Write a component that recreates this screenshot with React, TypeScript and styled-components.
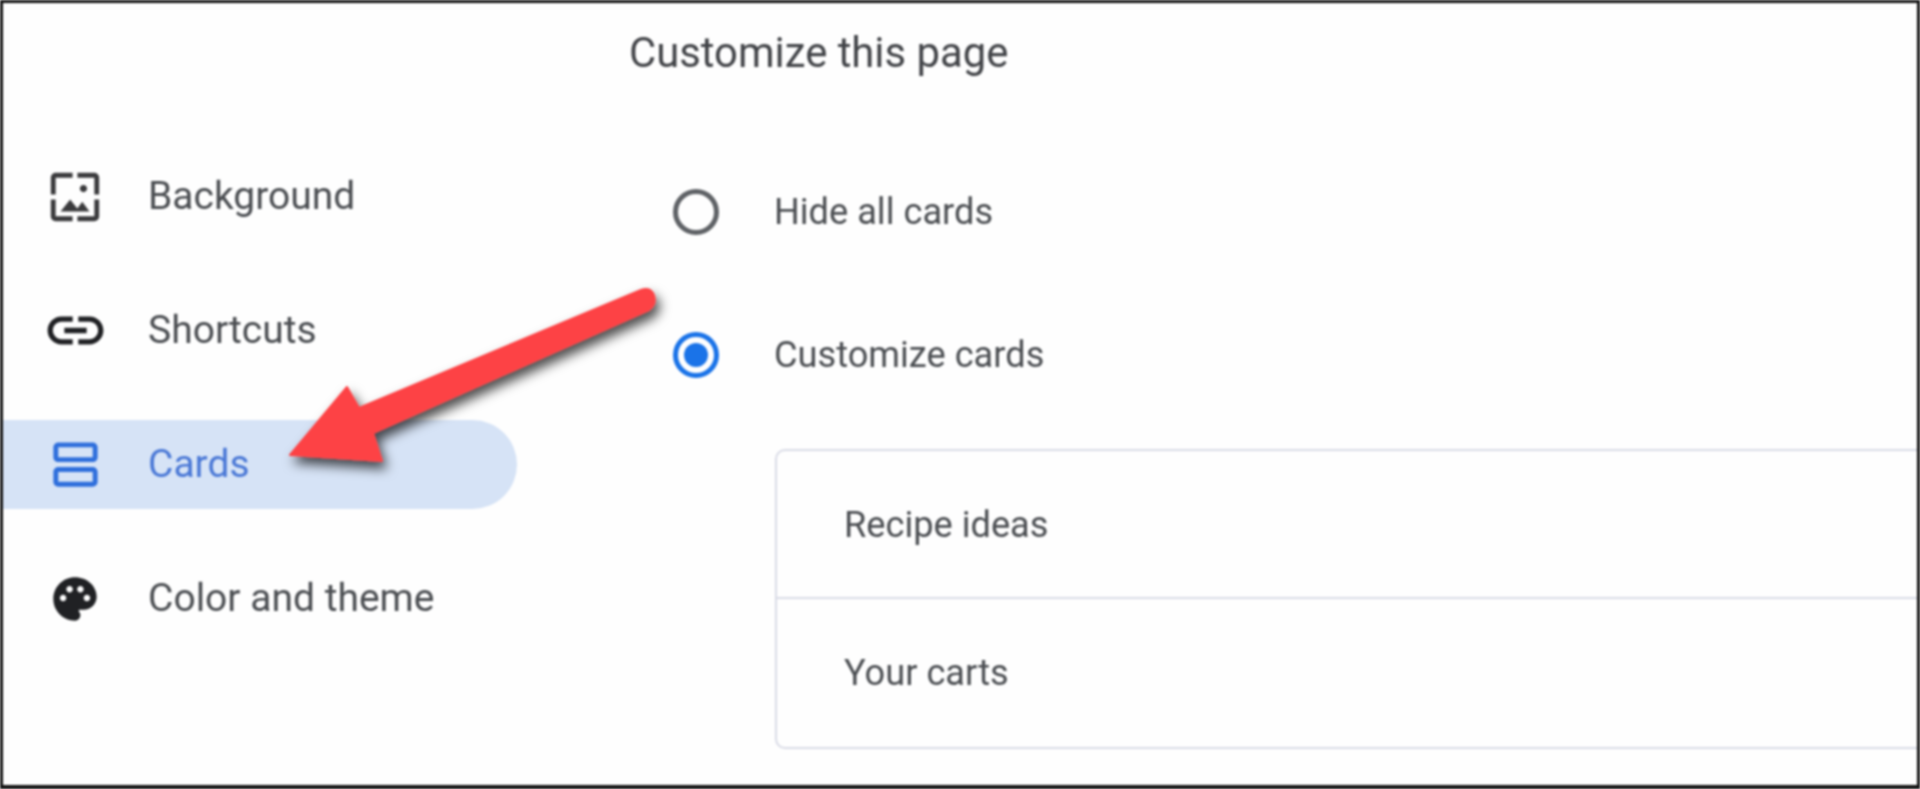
import React from "react";
import styled, { createGlobalStyle } from "styled-components";
import { MdWallpaper, MdLink, MdOutlineViewAgenda, MdPalette } from "react-icons/md";

const Global = createGlobalStyle`
  html, body { margin: 0; padding: 0; background: #fff; }
  body { font-family: Roboto, "Liberation Sans", sans-serif; }
`;

const Frame = styled.div`
  box-sizing: border-box;
  width: 1920px;
  height: 789px;
  border: 3px solid #111;
  border-bottom-width: 4px;
  background: #fefefe;
  overflow: hidden;
  position: relative;
  display: grid;
  grid-template-columns: 626px 1fr;
  filter: blur(1.2px);
`;

const Sidebar = styled.nav`
  display: flex;
  flex-direction: column;
  gap: 45px;
  padding-top: 149px;
`;

const NavRow = styled.div<{ $active?: boolean }>`
  width: 514px;
  height: 89px;
  display: flex;
  align-items: center;
  border-radius: 0 45px 45px 0;
  background: ${(p) => (p.$active ? "#d6e3f6" : "transparent")};
  color: ${(p) => (p.$active ? "#4a78d6" : "#4b4e52")};
`;

const IconSlot = styled.span<{ $color: string }>`
  flex: none;
  width: 60px;
  margin: 0 43px 0 42px;
  display: flex;
  justify-content: center;
  color: ${(p) => p.$color};
  & > svg { display: block; flex: none; }
`;

const NavLabel = styled.span`
  font-size: 39px;
  font-weight: 400;
  line-height: 1;
`;

const Main = styled.main`
  display: flex;
  flex-direction: column;
`;

const Title = styled.h1`
  margin: 0;
  height: 100px;
  font-size: 41.8px;
  font-weight: 400;
  line-height: 100px;
  color: #424448;
`;

const RadioGroup = styled.div`
  display: flex;
  flex-direction: column;
  gap: 53px;
  padding: 64px 0 0 44px;
`;

const RadioRow = styled.div`
  height: 90px;
  display: flex;
  align-items: center;
  gap: 55px;
`;

const Radio = styled.span<{ $on?: boolean }>`
  box-sizing: border-box;
  flex: none;
  width: 46px;
  height: 46px;
  border-radius: 50%;
  border: 5px solid ${(p) => (p.$on ? "#1a73e8" : "#5f6266")};
  padding: 6px;
  &::after {
    content: "";
    display: ${(p) => (p.$on ? "block" : "none")};
    width: 100%;
    height: 100%;
    border-radius: 50%;
    background: #1a73e8;
  }
`;

const OptionLabel = styled.span`
  font-size: 36.2px;
  line-height: 1;
  color: #4b4e52;
`;

const CardList = styled.div`
  box-sizing: border-box;
  margin: 49px -30px 0 146px;
  height: 300px;
  border: 2px solid #d9dbe6;
  border-radius: 10px;
  display: flex;
  flex-direction: column;
`;

const CardRow = styled.div`
  flex: 1;
  display: flex;
  align-items: center;
  padding-left: 67px;
  font-size: 36.2px;
  color: #4b4e52;
  & + & {
    border-top: 2px solid #d9dbe6;
    padding-bottom: 2px;
  }
`;

const ArrowLayer = styled.svg`
  position: absolute;
  left: -3px;
  top: -3px;
  width: 1920px;
  height: 789px;
  pointer-events: none;
`;

const items = [
  { label: "Background", Icon: MdWallpaper, size: 58, color: "#3a3a3c" },
  { label: "Shortcuts", Icon: MdLink, size: 67, color: "#202124" },
  { label: "Cards", Icon: MdOutlineViewAgenda, size: 59, color: "#2f6fdc", active: true },
  { label: "Color and theme", Icon: MdPalette, size: 52, color: "#202124" },
];

export default function App() {
  return (
    <>
      <Global />
      <Frame>
        <Sidebar>
          {items.map(({ label, Icon, size, color, active }) => (
            <NavRow key={label} $active={active}>
              <IconSlot $color={color}>
                <Icon size={size} />
              </IconSlot>
              <NavLabel>{label}</NavLabel>
            </NavRow>
          ))}
        </Sidebar>
        <Main>
          <Title>Customize this page</Title>
          <RadioGroup>
            <RadioRow>
              <Radio />
              <OptionLabel>Hide all cards</OptionLabel>
            </RadioRow>
            <RadioRow>
              <Radio $on />
              <OptionLabel>Customize cards</OptionLabel>
            </RadioRow>
          </RadioGroup>
          <CardList>
            <CardRow>Recipe ideas</CardRow>
            <CardRow>Your carts</CardRow>
          </CardList>
        </Main>
        <ArrowLayer viewBox="0 0 1920 789">
          <defs>
            <filter id="arrowShadow" x="-20%" y="-30%" width="150%" height="170%">
              <feDropShadow dx="4" dy="7" stdDeviation="6" floodColor="#000" floodOpacity="0.7" />
            </filter>
          </defs>
          <path
            d="M290 455 L347 387 L359 408 L641 290 Q649 287 653 293 Q658 303 649 310 L373 433 L382 461 Z"
            fill="#fd4345"
            stroke="#fd4345"
            strokeWidth="2"
            strokeLinejoin="round"
            filter="url(#arrowShadow)"
          />
        </ArrowLayer>
      </Frame>
    </>
  );
}
